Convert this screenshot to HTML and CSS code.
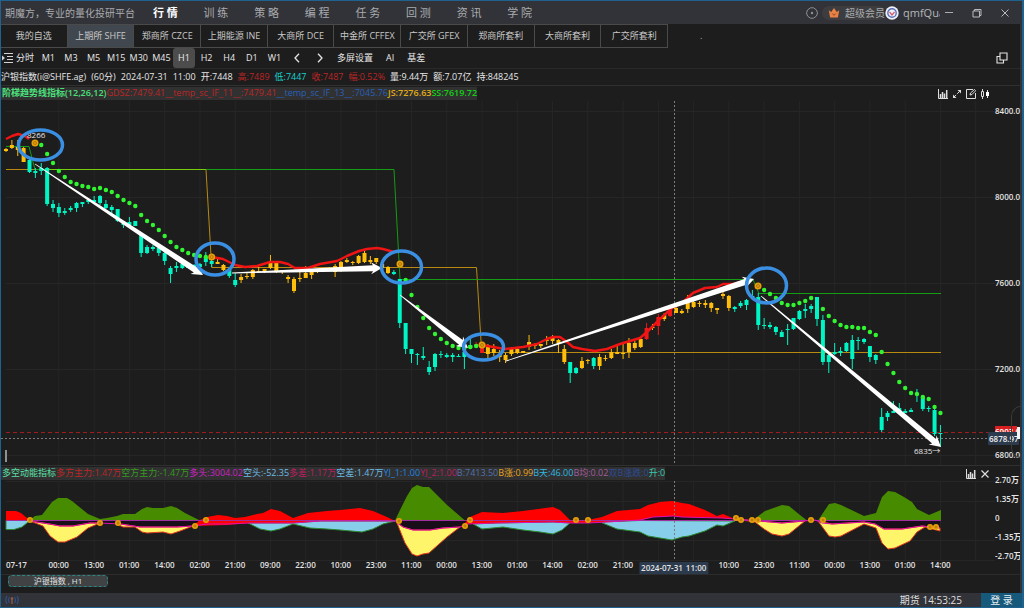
FILE: index.html
```html
<!DOCTYPE html>
<html lang="zh-CN">
<head>
<meta charset="utf-8">
<title>期魔方</title>
<link rel="stylesheet" href="styles.css">
</head>
<body>
<div class="window">
  <header class="titlebar">
    <span class="brand">期魔方，专业的量化投研平台</span>
    <nav class="nav">
      <a class="nav-item active" href="#">行 情</a><a class="nav-item" href="#">训 练</a><a class="nav-item" href="#">策 略</a><a class="nav-item" href="#">编 程</a><a class="nav-item" href="#">任 务</a><a class="nav-item" href="#">回 测</a><a class="nav-item" href="#">资 讯</a><a class="nav-item" href="#">学 院</a>
    </nav>
    <div class="account">
      <button class="icon-btn" aria-label="设置"><svg width="12" height="12" viewBox="0 0 12 12"><path d="M4.5 .8h3l3 2.2 1 3-1 3-3 2.2h-3l-3-2.2-1-3 1-3z" fill="none" stroke="#8c8f94"/><circle cx="6" cy="6" r="1.2" fill="#8c8f94"/></svg></button>
      <span class="member"><svg width="12" height="12" viewBox="0 0 12 12"><path d="M.8 3.2l2.4 1.9L6 1l2.800 4.100 2.400-1.900-1.300 7.300H2.100z" fill="#e98244"/><path d="M4.300 6.500L6 8.300l1.700-1.800" fill="none" stroke="#8a4a2c"/></svg><span>超级会员</span></span>
      <svg class="avatar" width="14" height="14" viewBox="0 0 14 14"><circle cx="7" cy="7" r="6.700" fill="#eef1fa"/><circle cx="7" cy="7" r="4.200" fill="none" stroke="#5b72b5" stroke-width="1.400"/><path d="M4.500 6l2.500 3 2.500-3" fill="none" stroke="#d4596a" stroke-width="1.200"/></svg>
      <span class="user">qmfQuant</span>
    </div>
    <div class="win-buttons">
      <button class="icon-btn" aria-label="最小化"><svg width="10" height="10" viewBox="0 0 10 10"><path d="M1 4.500h8" stroke="#aaacb0"/></svg></button>
      <button class="icon-btn" aria-label="还原"><svg width="10" height="10" viewBox="0 0 10 10"><path d="M1 3h6.500v6H1zM2.500 3V1.500H9V7.500H7.500" fill="none" stroke="#b8babd"/></svg></button>
      <button class="icon-btn" aria-label="关闭"><svg width="10" height="10" viewBox="0 0 10 10"><path d="M1.500 1.500l7 7M8.500 1.500l-7 7" stroke="#b8babd"/></svg></button>
    </div>
  </header>

  <div class="body">
    <div class="tabs-row">
      <div class="tabs">
        <button class="tab">我的自选</button><button class="tab active">上期所 SHFE</button><button class="tab">郑商所 CZCE</button><button class="tab">上期能源 INE</button><button class="tab">大商所 DCE</button><button class="tab">中金所 CFFEX</button><button class="tab">广交所 GFEX</button><button class="tab">郑商所套利</button><button class="tab">大商所套利</button><button class="tab">广交所套利</button>
      </div>
      <span class="dot">.</span>
    </div>

    <div class="toolbar">
      <button class="icon-btn" aria-label="菜单"><svg width="12" height="12" viewBox="0 0 12 12"><path d="M3 1.500h9M6 4.500h6M6 7.500h6M3 10.500h9" stroke="#d4d4d4"/><path d="M1 3.500L4 6 1 8.500z" fill="#d4d4d4"/></svg></button>
      <button class="tool">分时</button>
      <div class="periods">
        <button class="tool">M1</button><button class="tool">M3</button><button class="tool">M5</button><button class="tool">M15</button><button class="tool">M30</button><button class="tool">M45</button><button class="tool active">H1</button><button class="tool">H2</button><button class="tool">H4</button><button class="tool">D1</button><button class="tool">W1</button>
        <button class="tool" aria-label="向左"><svg width="8" height="10" viewBox="0 0 8 10"><path d="M6 .8L2 5l4 4.200" fill="none" stroke="#e4e4e4" stroke-width="1.300"/></svg></button>
        <button class="tool" aria-label="向右"><svg width="8" height="10" viewBox="0 0 8 10"><path d="M2 .8L6 5 2 9.200" fill="none" stroke="#e4e4e4" stroke-width="1.300"/></svg></button>
      </div>
      <div class="extras"><button class="tool">多屏设置</button><button class="tool">AI</button><button class="tool">基差</button></div>
      <button class="icon-btn popout" aria-label="弹出窗口"><svg width="12" height="12" viewBox="0 0 12 12"><path d="M4 1h7v7H4zM4 4.500H1V11h6.500V8" fill="none" stroke="#e4e4e4" stroke-width="1.100"/></svg></button>
    </div>

    <div class="quote">
      <span>沪银指数(i@SHFE.ag)</span><span>(60分)</span><span>2024-07-31</span><span>11:00</span><span>开:7448</span><span class="c-red">高:7489</span><span class="c-cyan">低:7447</span><span class="c-red">收:7487</span><span class="c-red">幅:0.52%</span><span>量:9.44万</span><span>额:7.07亿</span><span>持:848245</span>
    </div>

    <section class="panel main-panel">
      <div class="plot">
        <div class="legend">
          <div class="legend-list"><b class="c-name">阶梯趋势线指标(12,26,12)</b><span class="c-red">GDSZ:7479.41</span><span class="c-red">__temp_sc_IF_11__:7479.41</span><span class="c-blue">__temp_sc_IF_13__:7045.76</span><b class="c-gold">JS:7276.63</b><b class="c-lime">SS:7619.72</b></div>
          <div class="legend-icons">
            <button class="icon-btn" aria-label="指标"><svg width="10" height="10" viewBox="0 0 10 10"><path d="M.5 0v9.500H10" fill="none" stroke="#ddd"/><path d="M2.500 5v4M4.500 3v6M6.500 4.500V9M8.700 1v8" stroke="#ddd" stroke-width="1.500"/></svg></button>
            <button class="icon-btn" aria-label="放大"><svg width="10" height="10" viewBox="0 0 10 10"><path d="M2 8l6-6" stroke="#ddd" stroke-dasharray="3 1.500"/><path d="M5.500 1H9v3.500zM1 5.500V9h3.500z" fill="#ddd"/></svg></button>
            <button class="icon-btn" aria-label="编辑"><svg width="10" height="10" viewBox="0 0 10 10"><path d="M9.500 4v5.500h-9v-9H7M4 6l.5-2L8.500.5l1.200 1.200L6 5.500z" fill="none" stroke="#ddd"/></svg></button>
            <button class="icon-btn" aria-label="K线"><svg width="10" height="10" viewBox="0 0 10 10"><path d="M2.500 0v10M7.500 1v8" stroke="#ddd"/><path d="M1.500 2.500h2v5h-2z" fill="#1d1d1d" stroke="#ddd"/><path d="M6 3h3v4H6z" fill="#fff"/></svg></button>
          </div>
        </div>
        <svg class="chart" id="price-chart" viewBox="1 101 994 364" role="img" aria-label="K线图"></svg>
      </div>
      <div class="axis price-axis">
        <span>8400.0</span><span>8000.0</span><span>7600.0</span><span>7200.0</span><span>6800.0</span>
        <span class="last-price">6903.0</span>
        <span class="cursor-price">6878.97</span>
        <span class="drawer"></span>
      </div>
    </section>

    <section class="panel sub-panel">
      <div class="plot">
        <div class="legend">
          <div class="legend-list"><span class="c-name2">多空动能指标</span><span class="c-red">多方主力:1.47万</span><span class="c-green">空方主力:-1.47万</span><span class="c-magenta">多头:3004.02</span><span class="c-sky">空头:-52.35</span><span class="c-rose">多差:1.17万</span><span class="c-sky">空差:1.47万</span><span class="c-azure">YJ_1:1.00</span><span class="c-rose">YJ_2:1.00</span><span class="c-slate">B:7413.50</span><span class="c-amber">B涨:0.99</span><span class="c-aqua">B天:46.00</span><span class="c-plum">B均:0.02</span><span class="c-navy">双B涨跌:0</span><span class="c-teal">升:0</span></div>
          <div class="legend-icons">
            <button class="icon-btn" aria-label="指标"><svg width="10" height="10" viewBox="0 0 10 10"><path d="M.5 0v9.500H10" fill="none" stroke="#ddd"/><path d="M2.500 5v4M4.500 3v6M6.500 4.500V9M8.700 1v8" stroke="#ddd" stroke-width="1.500"/></svg></button>
            <button class="icon-btn" aria-label="关闭指标"><svg width="10" height="10" viewBox="0 0 10 10"><path d="M1.500 1.500l7 7M8.500 1.500l-7 7" stroke="#ddd" stroke-width="1.200"/></svg></button>
          </div>
        </div>
        <svg class="chart" id="energy-chart" viewBox="1 481 994 80" role="img" aria-label="多空动能指标图"></svg>
      </div>
      <div class="axis energy-axis"><span>2.70万</span><span>1.35万</span><span>0</span><span>-1.35万</span><span>-2.70万</span></div>
    </section>

    <div class="time-axis">
      <span class="date">07-17</span>
      <div class="times"><span>00:00</span><span>13:00</span><span>01:00</span><span>14:00</span><span>02:00</span><span>21:00</span><span>09:00</span><span>22:00</span><span>10:00</span><span>23:00</span><span>11:00</span><span>00:00</span><span>13:00</span><span>01:00</span><span>14:00</span><span>02:00</span><span>21:00</span><span></span><span></span><span>10:00</span><span>23:00</span><span>11:00</span><span>00:00</span><span>13:00</span><span>01:00</span><span>14:00</span>
        <span class="cursor-time"><span>2024-07-31</span><span>11:00</span></span>
      </div>
    </div>

    <div class="sheets"><button class="sheet">沪银指数 , H1</button></div>
  </div>

  <footer class="status">
    <svg width="14" height="10" viewBox="0 0 14 10"><path d="M2 1Q-.5 5 2 9M4.500 2Q2.500 5 4.500 8M12 1Q14.500 5 12 9M9.500 2Q11.500 5 9.500 8" fill="none" stroke="#2f4f8c" stroke-width="1.200"/><path d="M7 4v5" stroke="#9a5a3c" stroke-width="1.300"/><circle cx="7" cy="3.500" r="1.300" fill="#9a5a3c"/></svg>
    <span class="clock">期货 14:53:25</span>
    <button class="login">登 录</button>
  </footer>
</div>
<script src="chart.js"></script>
</body>
</html>
```

FILE: styles.css
```css
* { box-sizing: border-box; }
body {
  margin: 0;
  background: #1d1d1d;
  color: #dedede;
  font: 9px/12px "Open Sans", "Noto Sans CJK SC", sans-serif;
}
button {
  margin: 0;
  padding: 0;
  border: 0;
  background: none;
  color: inherit;
  font: inherit;
  white-space: nowrap;
}
a { color: inherit; text-decoration: none; }
svg { display: block; }
b { font-weight: 600; }

.window {
  display: flex;
  flex-direction: column;
  min-height: 100vh;
  overflow: hidden;
  border: 1px solid #1f618f;
  border-right-width: 2px;
}
.icon-btn { display: flex; align-items: center; justify-content: center; }

.titlebar {
  display: flex;
  align-items: center;
  height: 23px;
  padding-left: 4px;
  background: #323338;
  color: #a9abaf;
  white-space: nowrap;
}
.brand { flex: 0 0 135px; font-size: 10px; line-height: 14px; }
.nav { display: grid; grid-template-columns: repeat(8, 1fr); flex: 0 0 405px; text-align: center; font-size: 11px; }
.nav-item.active { color: #fff; font-weight: 700; }
.account { display: flex; align-items: center; margin-left: auto; font-size: 10px; }
.member { display: flex; align-items: center; gap: 5px; margin-left: 4px; padding: 1px 0 1px 6px; border-radius: 8px; background: #3d3d3f; }
.user { width: 37px; margin-left: 4px; overflow: hidden; font-size: 11px; line-height: 14px; color: #b4b6b9; }
.win-buttons { display: flex; gap: 18px; margin: 0 12px 0 4px; }

.body { display: flex; flex-direction: column; flex: 1; border-right: 2px solid #323338; }
.tabs-row { display: flex; align-items: center; height: 24px; }
.tabs { display: grid; grid-template-columns: repeat(10, 1fr); flex: 0 0 667px; height: 24px; border-top: 1px solid #4a4a4a; border-bottom: 1px solid #4a4a4a; }
.tab { border-right: 1px solid #4a4a4a; color: #c8c8c8; }
.tab.active { background: #41474e; }
.dot { margin-left: 32px; color: #aaa; }

.toolbar { display: flex; align-items: center; height: 20px; color: #e8e8e8; }
.toolbar > .tool { width: 24px; }
.periods { display: grid; grid-template-columns: repeat(13, 1fr); flex: 0 0 294px; }
.tool { height: 20px; display: flex; align-items: center; justify-content: center; }
.tool.active { border-radius: 3px; background: #4c4c4c; }
.extras { display: flex; gap: 13px; margin-left: 6px; }
.popout { margin-left: auto; margin-right: 12px; }

.quote { display: flex; align-items: center; gap: 5px; height: 17px; border-top: 1px solid #292929; white-space: nowrap; color: #e6e6e6; }

.panel { display: grid; grid-template-columns: minmax(0, 1fr) 25px; border-top: 1px solid #303030; }
.plot { min-width: 0; }
.legend { display: flex; align-items: center; justify-content: space-between; height: 15px; }
.legend-list { display: flex; height: 13px; padding-left: 1px; background: #313131; white-space: nowrap; }
.legend-icons { display: flex; gap: 4px; margin-right: 5px; }
.chart { width: 100%; height: auto; overflow: hidden; }

.axis { position: relative; font-size: 8px; font-weight: 600; display: flex; flex-direction: column; white-space: nowrap; color: #e4e4e4; }
.price-axis { justify-content: space-between; padding: 19px 0 4px; }
.energy-axis { gap: 7px; padding-top: 8px; overflow: hidden; }
.last-price, .cursor-price, .drawer { position: absolute; }
.last-price { right: 3px; bottom: 30px; width: 22px; height: 9px; overflow: hidden; background: #d91f1f; color: #fff; line-height: 11px; }
.cursor-price { right: 1px; bottom: 20px; width: 31px; height: 13px; overflow: hidden; padding-left: 1px; background: #2b3a4c; color: #f0f0f0; line-height: 13px; }
.drawer { right: -2px; bottom: 7px; width: 11px; height: 52px; border: 1px solid #3a3a3a; border-right: 0; border-radius: 10px 0 0 10px; }
.drawer::before { content: ""; position: absolute; left: 5px; top: 20px; width: 3px; height: 12px; background: #f4f4f4; }

.time-axis { display: flex; height: 12px; margin-right: 62px; font-size: 8px; font-weight: 600; line-height: 6px; color: #e4e4e4; white-space: nowrap; }
.date { flex: 0 0 40px; padding-left: 5px; }
.times { position: relative; display: grid; grid-template-columns: repeat(26, 1fr); flex: 1; text-align: center; }
.cursor-time { position: absolute; left: 69%; top: 0; transform: translateX(-50%); display: flex; gap: 3px; padding: 0 2px; background: #2b3a4c; line-height: 12px; }

.sheets { flex: 1; padding-left: 7px; border-top: 1px solid #2c2c2c; }
.sheet { display: block; width: 100px; height: 12px; border: 1px dashed #2b8585; border-radius: 4px; background: #404244; font-size: 8px; line-height: 10px; color: #e6e6e6; }

.status { display: flex; align-items: center; height: 14px; padding-left: 4px; background: #323338; font-size: 10px; }
.clock { margin-left: auto; }
.login { width: 41px; height: 14px; margin-left: 19px; background: #17597a; color: #e6eef2; line-height: 14px; }

.c-red { color: #bc2626; }
.c-cyan { color: #19d0d0; }
.c-blue { color: #2860b8; }
.c-name { color: #4be07c; }
.c-name2 { color: #5be0a8; }
.c-gold { color: #e0ac14; }
.c-lime { color: #12d012; }
.c-green { color: #359a20; }
.c-magenta { color: #cc20c4; }
.c-sky { color: #6cbce4; }
.c-rose { color: #b82060; }
.c-azure { color: #1f86e0; }
.c-slate { color: #5272b0; }
.c-amber { color: #e8a41e; }
.c-aqua { color: #30b8e0; }
.c-plum { color: #a45c9e; }
.c-navy { color: #2c4c98; }
.c-teal { color: #38c8ae; }

.grid { stroke: #262626; fill: none; }
.wick, .candle { fill: none; stroke: #00f5c4; }
.candle { stroke-width: 4; }
.up { stroke: #ffbe0a; }
.hot { stroke: #f01818; }
.trend { fill: none; stroke: #f01414; stroke-width: 2.5; stroke-linejoin: round; }
.bead { fill: #30f530; }
.marker { fill: #e8a008; }
.marker-core { fill: none; stroke: #b07808; }
.step-green { fill: none; stroke: #149c14; }
.step-gold { fill: none; stroke: #b88a12; }
.step-mix { fill: none; stroke: #78cc0c; }
.arrow { fill: #fff; }
.ring { fill: none; stroke: #3a8fe2; stroke-width: 3.5; }
.cursor { fill: none; stroke: #7c7c7c; stroke-dasharray: 2 2; }
.last { fill: none; stroke: #a01c1c; stroke-dasharray: 4 3; }
.note { fill: #e6e6e6; font-size: 8px; }
.handle { fill: #909090; }
.bull { fill: #ff0000; }
.bear { fill: #478c00; }
.sky { fill: #87ceeb; stroke: #2a8a30; stroke-width: 1; }
.sun { fill: #fff56a; stroke: #e03a20; stroke-width: 1; }
.gap { fill: #190d1a; }
.base { fill: none; stroke: #a030a0; }
.flow { fill: none; stroke: #e010b0; }
```

FILE: chart.js
```js
const NS = "http://www.w3.org/2000/svg";
const STEP = 5.877;
const xAt = i => 6 + i * STEP;

function add(svg, tag, cls, attrs, text) {
  const el = document.createElementNS(NS, tag);
  el.setAttribute("class", cls);
  for (const k in attrs) el.setAttribute(k, attrs[k]);
  if (text) el.textContent = text;
  svg.appendChild(el);
}
const line = (svg, cls, d) => add(svg, "path", cls, { d });
const area = (svg, cls, points) => add(svg, "polygon", cls, { points });

function grid(svg, top, bottom, rows) {
  for (let i = 9; i < 170; i += 6) line(svg, "grid", `M${xAt(i)} ${top}V${bottom}`);
  rows.forEach(y => line(svg, "grid", `M6 ${y}H995`));
}

// high, low, body top, body bottom; y = gold, g = teal, r = red
const candles = `y148,152,149,151 y140,149,145,148 y140,156,147,150 y147,162,148,162 g159,173,160,172 g168,178,171,173
g163,175,168,171 g167,206,168,204 g200,212,204,208 g203,217,207,213 g208,215,211,213 g206,212,208,210 g202,212,203,208
g202,207,202,204 g199,204,200,202 g196,203,200,202 g195,205,196,203 g200,209,204,208 g205,215,207,210 g209,222,209,221
g221,228,223,225 g217,227,222,225 g221,226,221,226 g233,257,234,253 g245,254,247,253 g245,251,247,249 g247,256,248,253
g251,265,253,261 g266,283,268,274 g262,272,266,268 g262,269,264,268 g263,268,264,268 g264,270,265,269 g263,267,264,267
g252,266,257,262 g259,267,261,264 y259,264,262,264 y264,271,265,270 g268,278,270,276 g273,287,280,285 y274,283,277,280
y273,279,276,277 y269,279,270,277 y267,272,271,272 y269,273,269,271 y255,269,263,268 y262,273,263,271 y270,274,270,272
y275,283,277,279 y277,293,279,291 y272,282,278,279 y266,278,273,278 y270,279,272,275 y269,273,270,272 y268,271,269,271
y267,271,268,270 y264,277,266,272 y261,272,262,268 y258,263,260,262 y261,265,262,263 y255,264,256,263 y251,263,253,262
y256,264,260,262 y258,264,258,262 y262,270,264,268 y266,274,267,273 g270,275,272,274 g279,328,279,323 g323,354,323,349
g349,363,349,354 g353,365,354,355 g347,360,356,358 g361,375,367,372 g353,371,354,367 g351,358,354,355 g353,358,355,357
g353,362,355,357 g354,357,356,357 g352,369,352,357 g339,349,345,348 r342,347,344,346 r342,353,345,353 y344,358,345,354
y344,356,349,353 y350,362,355,357 y353,363,355,360 y347,356,349,354 y347,354,349,353 y351,353,351,353 y335,350,342,347
y343,349,345,346 y344,348,344,346 y336,345,340,341 y335,344,337,341 y339,353,340,343 y345,364,349,362 g362,383,362,373
g367,374,368,373 y357,369,361,368 y359,364,360,361 g357,369,358,366 y354,370,357,366 y355,361,358,359 y349,359,352,358
y346,354,352,354 y343,359,353,354 y338,358,343,352 y341,350,343,348 y338,348,339,347 r323,340,328,339 y324,330,327,328
r314,335,317,326 y313,321,315,319 r308,317,309,316 y306,313,308,313 y309,314,311,313 y295,313,300,309 y298,308,302,307
y301,307,303,304 y300,308,303,305 y302,312,303,308 y308,314,308,310 y292,299,294,296 y295,311,296,308 g306,312,307,309
g301,308,303,306 g299,310,300,305 g290,299,296,298 g293,330,297,325 g318,329,325,326 g322,329,325,327 g326,335,327,332
g330,337,332,337 g324,345,329,330 g318,330,318,329 g310,320,311,319 g304,318,309,311 g304,313,306,309 g297,326,297,319
g315,365,320,362 g353,373,355,362 g343,355,352,354 g347,356,351,353 g342,352,343,351 g335,369,340,359 g337,350,340,341
g338,344,339,342 g346,362,346,357 g354,364,355,360 g408,432,417,430 g411,421,413,417 g401,413,411,413 g403,413,408,412
g409,413,411,413 g408,412,410,412 g389,402,393,395 g396,411,397,409 g406,412,408,409 g408,436,410,434 g425,447,433,434`.split(/\s+/);

const beads = {
  6: [145,154,163,171,177,182,184,186,187,189,188,190,192,196,200,203,206,215,221,225,230,236,242,247,250,253,255,256,257],
  68: [280,295,307,318,328,334,339,343,346,348,348,347,346],
  129: [290,294,298,303,305,305,303,301,298],
  139: [309,316,321,325,327,327,328,328,332,335,352,364,373,382,388,393,394,397,399,407,413]
};

const price = document.getElementById("price-chart");
grid(price, 101, 465, [111.5, 197.5, 283.5, 369.5, 455.5]);
line(price, "step-gold", "M6 169.500H206L211.700 267.500H476.500L481.700 352.500H941");
line(price, "step-green", "M6 146.500H29L35 169.500H394L400 279.500H753L759 293.500H941");
line(price, "step-mix", "M45 169.500H206");

const tone = { y: "up", g: "down", r: "hot" };
candles.forEach((c, i) => {
  const [h, l, t, b] = c.slice(1).split(",").map(Number);
  const x = xAt(i);
  line(price, "wick " + tone[c[0]], `M${x} ${h}V${l}`);
  line(price, "candle " + tone[c[0]], `M${x} ${t}V${Math.max(b, t + 1)}`);
});

line(price, "trend", "M6 139L12 136L18 134L25 136L29 139");
line(price, "trend", "M212 257L223 259L235 265L245 267L257 266L270 262L280 262L288 264L295 268L308 268L320 264L337 261L347 256L359 251L367 249L377 248L383 249L394 252");
line(price, "trend", "M482 345L493 347L505 349L523 347L537 344L547 339L553 337L560 337L567 342L573 347L582 349L595 351L607 349L620 344L640 338L648 331L660 319L672 308L682 303L693 293L705 288L717 287L723 284L733 284L745 281");
for (const start in beads)
  beads[start].forEach((cy, k) => add(price, "circle", "bead", { cx: xAt(+start + k), cy, r: 2.2 }));

line(price, "cursor", "M674.500 101V465");
line(price, "last", "M6 432.500H995");
line(price, "cursor", "M1 438.500H995");
add(price, "text", "note", { x: 27, y: 138 }, "8266");
[[35, 143], [211.7, 257], [400, 264], [482, 345], [758, 286]].forEach(([cx, cy]) => {
  add(price, "circle", "marker", { cx, cy, r: 3.5 });
  add(price, "circle", "marker-core", { cx, cy, r: 1.5 });
});

// tapered shaft that ends in a barbed head
function arrow(x1, y1, x2, y2, shaft, head) {
  const len = Math.hypot(x2 - x1, y2 - y1), ux = (x2 - x1) / len, uy = (y2 - y1) / len;
  const at = (back, side) => `${x2 - ux * back - uy * side},${y2 - uy * back + ux * side}`;
  area(price, "arrow", [at(len, .4), at(9, shaft), at(11, head), at(0, 0), at(11, -head), at(9, -shaft), at(len, -.4)].join(" "));
}
arrow(35, 164, 203, 275, 3, 6);
arrow(232, 273, 382, 268, 3, 6);
arrow(400, 295, 468, 348, 3, 6);
arrow(506, 361, 754, 279, 3, 6);
arrow(761, 296, 941, 447, 3, 6);

[[40.5,145,22,15], [215,259,19,16], [401.5,267,20,16], [483.5,347,20,13], [766.5,285.5,20,17.5]]
  .forEach(([cx, cy, rx, ry]) => add(price, "ellipse", "ring", { cx, cy, rx, ry }));
add(price, "text", "note", { x: 914, y: 454 }, "6835→");
add(price, "rect", "handle", { x: 5, y: 450, width: 2, height: 12 });

const energy = document.getElementById("energy-chart");
grid(energy, 481, 561, [481.5, 501.5, 540.5, 560.5]);
const flow = "30,521 43,523 50,524 60,526 73,526 90,523 100,523 120,524 140,527 160,527 177,527 193,526 207,524 227,524 250,523 293,523 320,521 395,521 403,527 413,530 430,530 443,528 460,527 467,524 497,523 553,522 570,523 588,523 607,522 640,520 653,517 673,516 682,517 722,518 735,519 759,521 782,523 804,521 815,520 822,523 832,524 864,522 875,524 884,529 902,529 922,526 940,528";
area(energy, "gap", "30,520.5 " + flow + " 940,520.5");
area(energy, "bear", "29,520.5 35,516 42,515 52,502 58,498 67,498 72,501 88,514 100,519 107,518 117,516 123,514 135,514 142,509 147,507 153,508 163,508 171,506 177,508 185,513 200,520.5");
area(energy, "bear", "395,520.5 400,510 407,496 412,488 417,485 423,487 429,487 447,505 465,520.5");
area(energy, "bear", "755,520.5 757,517 765,511 782,505 789,506 800,515 807,520.5");
area(energy, "bear", "818,520.5 829,504 835,503 841,505 864,516 876,513 882,497 888,491 895,492 904,497 912,502 917,509 929,515 941,510 941,520.5");
area(energy, "sky", "6,520.5 6,529.5 14,529.5 22,527 30,520.5");
area(energy, "sky", "248,523 260,529 271,531 280,529 293,524 310,528 327,529 340,530 362,532 373,529 383,524 395,521 320,521 293,523");
area(energy, "sky", "473,524 482,529 503,527 523,530 540,532 553,534 562,530 570,523 553,522 497,523");
area(energy, "sky", "600,522 617,529 640,532 648,536 672,540 682,537 689,536 705,531 717,525 723,526 735,521 640,520.5");
area(energy, "sun", "30,521 43,526 50,536 58,542 65,542 77,537 88,528 100,523 90,523 73,526 60,526 43,523");
area(energy, "sun", "115,523 123,527 135,527 142,532 147,533 163,532 171,534 180,531 193,526 177,527 140,527");
area(energy, "sun", "397,523 403,527 413,530 430,530 443,528 460,527 447,537 429,553 423,554 417,556 412,554 405,543");
area(energy, "sun", "735,519 755,522 764,529 772,534 782,536 789,534 805,521 782,523 759,521");
area(energy, "sun", "818,521 829,536 835,537 841,536 864,524 876,528 882,543 888,549 895,548 910,541 917,532 925,527 940,531 940,528 922,526 902,529 884,529 875,524 864,522 832,524");
area(energy, "bull", "6,520.5 6,511 16,511 21,513 30,520.5");
area(energy, "bull", "193,526 200,520 207,517 218,515 227,516 235,518 245,517 257,514 263,513 271,509 280,511 293,518 308,513 327,511 340,510 360,508 373,511 387,517 395,521 320,521 293,523 250,523 227,525");
area(energy, "bull", "460,527 465,523 470,517 482,512 503,513 523,511 553,507 560,510 570,520 588,520 602,517 617,511 640,509 648,505 660,502 672,501 682,503 689,504 705,510 717,516 723,514 735,519 722,518 682,517 673,516 653,517 640,520 607,522 588,523 570,523 553,522 497,523 467,524");
line(energy, "base", "M6 520.500H941");
add(energy, "polyline", "flow", { points: flow });
line(energy, "cursor", "M674.500 481V561");
[[30,520],[100,523],[118,523],[195,526],[206,520],[399,521],[465,526],[470,520],[576,520],[588,520],[736,518],[741,520],[752,520],[758,520],[811,520],[823,520],[930,527],[936,527]]
  .forEach(([cx, cy]) => {
    add(energy, "circle", "marker", { cx, cy, r: 3 });
    add(energy, "circle", "marker-core", { cx, cy, r: 1 });
  });
```
